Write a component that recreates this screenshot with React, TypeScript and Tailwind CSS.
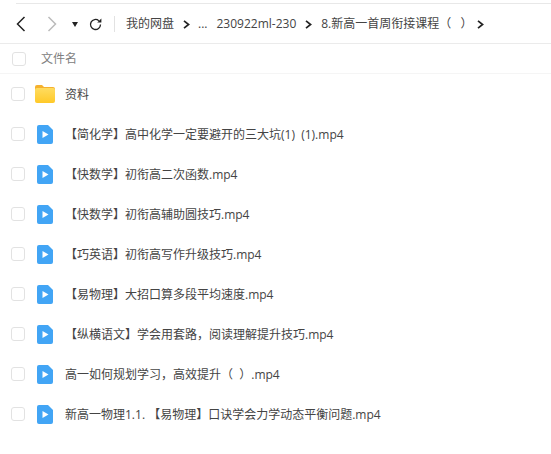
const files = [
  '【简化学】高中化学一定要避开的三大坑(1)  (1).mp4',
  '【快数学】初衔高二次函数.mp4',
  '【快数学】初衔高辅助圆技巧.mp4',
  '【巧英语】初衔高写作升级技巧.mp4',
  '【易物理】大招口算多段平均速度.mp4',
  '【纵横语文】学会用套路，阅读理解提升技巧.mp4',
  '高一如何规划学习，高效提升（  ）.mp4',
  '新高一物理1.1. 【易物理】口诀学会力学动态平衡问题.mp4',
];

function Checkbox() {
  return <span className="h-[14px] w-[14px] shrink-0 rounded-[3px] border border-[#e2e2e2] bg-white" />;
}

function Arrow() {
  return (
    <svg width="7" height="9" viewBox="0 0 7 9" className="shrink-0">
      <path d="M1 .8 L5.6 4.5 L1 8.2" fill="none" stroke="#222" strokeWidth="1.7" />
    </svg>
  );
}

function FolderIcon() {
  return (
    <svg width="20" height="18" viewBox="0 0 20 18" className="shrink-0">
      <defs>
        <linearGradient id="folderFill" x1="0" y1="0" x2="0" y2="1">
          <stop offset="0" stopColor="#ffdc60" />
          <stop offset="1" stopColor="#ffc928" />
        </linearGradient>
      </defs>
      <path d="M0 2A2 2 0 0 1 2 0h5l2 2h9a2 2 0 0 1 2 2v2H0z" fill="#f5b12e" />
      <rect x="0" y="3" width="20" height="15" rx="2" fill="url(#folderFill)" />
    </svg>
  );
}

function VideoIcon() {
  return (
    <svg width="16" height="19" viewBox="0 0 16 19" className="shrink-0">
      <path d="M2 0h9l5 5v12a2 2 0 0 1-2 2H2a2 2 0 0 1-2-2V2a2 2 0 0 1 2-2z" fill="#42a5f5" />
      <path d="M5.5 6 L11.5 9.5 L5.5 13z" fill="#fff" />
    </svg>
  );
}

function Row({ icon, name }: { icon: React.ReactNode; name: string }) {
  return (
    <div className="flex h-10 items-center pl-[11px]">
      <Checkbox />
      <div className="ml-[10px] flex w-[20px] justify-center">{icon}</div>
      <span className="ml-[10px] whitespace-pre pt-[2px]">{name}</span>
    </div>
  );
}

export default function App() {
  return (
    <div className="h-[454px] w-[551px] overflow-hidden bg-white font-['Open_Sans','Noto_Sans_CJK_SC',sans-serif] text-[12px] leading-4 text-[#444]">
      <div className="ml-4 mt-[3px] h-px bg-[#e8e8e8]" />
      <div className="flex h-[40px] items-center border-b border-[#ebebeb] pl-[16px] pt-px">
        <svg width="10" height="16" viewBox="0 0 10 16" className="shrink-0">
          <path d="M8.5 1 L1.5 8 L8.5 15" fill="none" stroke="#222" strokeWidth="1.5" />
        </svg>
        <svg width="10" height="16" viewBox="0 0 10 16" className="ml-[21px] shrink-0">
          <path d="M1.5 1 L8.5 8 L1.5 15" fill="none" stroke="#bbb" strokeWidth="1.5" />
        </svg>
        <svg width="6" height="5" viewBox="0 0 6 5" className="ml-[15px] shrink-0">
          <path d="M0 0H6L3 5z" fill="#222" />
        </svg>
        <svg width="13" height="13" viewBox="0 0 13 13" className="ml-[11px] shrink-0">
          <path d="M11.5 6.5A5 5 0 1 1 9.8 2.7" fill="none" stroke="#222" strokeWidth="1.3" />
          <path d="M8.2 4.4H12.4V0.6z" fill="#222" />
        </svg>
        <div className="ml-[12px] h-[16px] w-px bg-[#e2e2e2]" />
        <span className="ml-[11px] whitespace-nowrap">我的网盘</span>
        <div className="ml-[9px]"><Arrow /></div>
        <span className="ml-[8px]">...</span>
        <span className="ml-[9px] whitespace-nowrap">230922ml-230</span>
        <div className="ml-[9px]"><Arrow /></div>
        <span className="ml-[9px] whitespace-pre">8.新高一首周衔接课程（   ）</span>
        <div className="ml-[4px]"><Arrow /></div>
      </div>
      <div className="flex h-[30px] items-center border-b border-[#f5f5f5] pl-[12px] text-[#808080]">
        <Checkbox />
        <span className="ml-[15px]">文件名</span>
      </div>
      <Row icon={<FolderIcon />} name="资料" />
      {files.map((name) => (
        <Row key={name} icon={<VideoIcon />} name={name} />
      ))}
    </div>
  );
}
